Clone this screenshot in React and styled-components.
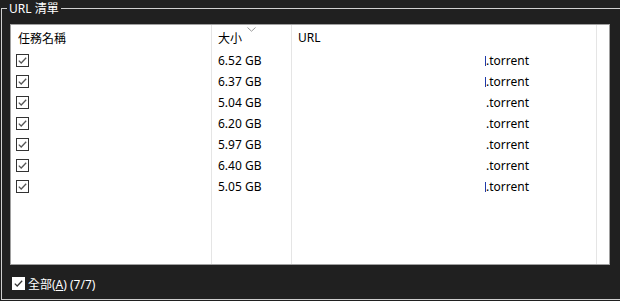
import React from "react";
import styled, { createGlobalStyle } from "styled-components";

const Global = createGlobalStyle`
  html, body { margin: 0; padding: 0; background: #202020; overflow: hidden; }
  body { font-family: "Noto Sans", "Noto Sans CJK TC", sans-serif; font-size: 12px; }
`;

const Page = styled.div`
  width: 620px;
  height: 301px;
  padding-top: 8px;
  padding-left: 1px;
  box-sizing: border-box;
`;

const Group = styled.div`
  position: relative;
  box-sizing: border-box;
  width: 640px;
  height: 292px;
  border: 1px solid #cfcfcf;
  padding: 15px 0 0 8px;
  display: flex;
  flex-direction: column;
`;

const Legend = styled.div`
  position: absolute;
  top: -9px;
  left: 5px;
  padding: 0 2px;
  background: #202020;
  color: #ffffff;
  line-height: 17px;
  font-size: 12px;
`;

const ListBox = styled.div`
  box-sizing: border-box;
  width: 600px;
  height: 241px;
  border: 1px solid #a0a0a0;
  background: #ffffff;
  display: flex;
  overflow: hidden;
`;

const Column = styled.div`
  position: relative;
  flex: 0 0 ${(p) => p.$w}px;
  box-sizing: border-box;
  border-right: ${(p) => (p.$noLine ? "none" : "1px solid #e5e5e5")};
  display: flex;
  flex-direction: column;
`;

const HeaderCell = styled.div`
  height: 25px;
  display: flex;
  align-items: center;
  padding-left: ${(p) => p.$pad}px;
  color: #000;
  white-space: nowrap;
`;

const Cell = styled.div`
  height: 21px;
  display: flex;
  align-items: center;
  padding-left: ${(p) => p.$pad}px;
  color: #000;
  white-space: nowrap;
`;

const SortArrow = styled.svg`
  position: absolute;
  left: 35px;
  top: 2px;
`;

const Sliver = styled.span`
  display: inline-block;
  width: 1px;
  height: 10px;
  margin-right: 0px;
  background: #1f3aa8;
  margin-left: -1px;
`;

const Footer = styled.div`
  display: flex;
  align-items: center;
  gap: 3px;
  margin-top: 12px;
  margin-left: 2px;
  color: #fff;
  height: 13px;
`;

const Underline = styled.span`
  text-decoration: underline;
`;

const CheckSvg = ({ dark }) => (
  <svg width="13" height="13" viewBox="0 0 13 13">
    <rect
      x="0.5"
      y="0.5"
      width="12"
      height="12"
      fill={dark ? "#ffffff" : "#ffffff"}
      stroke={dark ? "#ffffff" : "#333333"}
    />
    <path
      d="M2.8 6.6 L5.2 9 L10.2 3.8"
      fill="none"
      stroke={dark ? "#333333" : "#555555"}
      strokeWidth="1.3"
    />
  </svg>
);

const rows = [
  { size: "6.52 GB", bar: true },
  { size: "6.37 GB", bar: true },
  { size: "5.04 GB", bar: false },
  { size: "6.20 GB", bar: false },
  { size: "5.97 GB", bar: false },
  { size: "6.40 GB", bar: false },
  { size: "5.05 GB", bar: true },
];

export default function App() {
  return (
    <>
      <Global />
      <Page>
        <Group>
          <Legend>URL 清單</Legend>
          <ListBox>
            <Column $w={201}>
              <HeaderCell $pad={7}>任務名稱</HeaderCell>
              {rows.map((r, i) => (
                <Cell key={i} $pad={5}>
                  <CheckSvg />
                </Cell>
              ))}
            </Column>
            <Column $w={80}>
              <SortArrow width="9" height="5" viewBox="0 0 9 5">
                <path d="M0.5 0.5 L4.5 4.2 L8.5 0.5" fill="none" stroke="#9a9a9a" strokeWidth="1" />
              </SortArrow>
              <HeaderCell $pad={6}>大小</HeaderCell>
              {rows.map((r, i) => (
                <Cell key={i} $pad={6}>
                  {r.size}
                </Cell>
              ))}
            </Column>
            <Column $w={305}>
              <HeaderCell $pad={6}>URL</HeaderCell>
              {rows.map((r, i) => (
                <Cell key={i} $pad={194}>
                  {r.bar && <Sliver />}
                  .torrent
                </Cell>
              ))}
            </Column>
            <Column $w={12} $noLine />
          </ListBox>
          <Footer>
            <CheckSvg dark />
            <span>
              全部(<Underline>A</Underline>) (7/7)
            </span>
          </Footer>
        </Group>
      </Page>
    </>
  );
}
